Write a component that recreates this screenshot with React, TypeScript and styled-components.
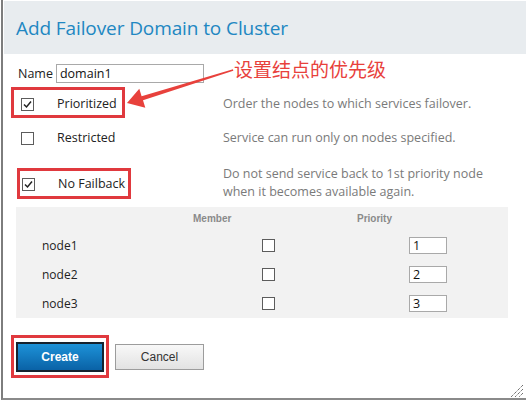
import styled, { createGlobalStyle } from "styled-components";

const GlobalStyle = createGlobalStyle`
  html, body {
    margin: 0;
    padding: 0;
    background: #fff;
  }
  body {
    font-family: "Open Sans", "Liberation Sans", sans-serif;
  }
`;

const Page = styled.div`
  position: relative;
  width: 526px;
  height: 400px;
  overflow: hidden;
`;

const Dialog = styled.div`
  box-sizing: border-box;
  width: 525px;
  height: 400px;
  margin-left: 1px;
  padding-left: 1px;
  border-left: 2px solid #7d7d7d;
  border-bottom: 2px solid #8a8a8a;
  display: flex;
  flex-direction: column;
`;

const Header = styled.div`
  height: 53px;
  margin-top: 1px;
  padding: 1px 0 0 12px;
  box-sizing: border-box;
  display: flex;
  align-items: center;
  background: #e8ecef;
  color: #2187c2;
  font-size: 19px;
  letter-spacing: -0.1px;
`;

const NameRow = styled.div`
  margin-top: 10px;
  padding-left: 14px;
  display: flex;
  align-items: center;
  gap: 3px;
  font-size: 12.5px;
  color: #222;
`;

const TextInput = styled.input<{ $w: number; $h: number }>`
  box-sizing: border-box;
  width: ${(p) => p.$w}px;
  height: ${(p) => p.$h}px;
  margin: 0;
  padding: 0 3px;
  border: 1px solid #a9a9a9;
  font-family: "Open Sans", "Liberation Sans", sans-serif;
  font-size: 12.5px;
  color: #111;
  background: #fff;
`;

const Options = styled.div`
  margin-top: 4px;
  padding-left: 17px;
  display: flex;
  flex-direction: column;
`;

const OptionRow = styled.div`
  display: grid;
  grid-template-columns: 202px 1fr;
  align-items: center;
  padding: 8px 0;
  line-height: 18px;

  &:last-child {
    padding: 10px 0 6px;
  }
`;

const OptionLabel = styled.div<{ $shift?: number }>`
  display: flex;
  align-items: center;
  gap: 23px;
  margin-left: ${(p) => p.$shift || 0}px;
  margin-top: ${(p) => (p.$shift ? 2 : 0)}px;
  font-size: 12.5px;
  color: #222;
`;

const Description = styled.div`
  font-size: 12.5px;
  color: #7a7a7a;
`;

const Box = styled.span`
  box-sizing: border-box;
  width: 13px;
  height: 13px;
  flex: none;
  display: inline-flex;
  align-items: center;
  justify-content: center;
  border: 1px solid #5c5c5c;
  background: #fff;
`;

const NodeTable = styled.div`
  width: 492px;
  margin: 0 0 0 12px;
  background: #f2f2f2;
  display: flex;
  flex-direction: column;
`;

const NodeRow = styled.div<{ $head?: boolean }>`
  display: grid;
  grid-template-columns: 177px 164px 1fr;
  align-items: ${(p) => (p.$head ? "start" : "center")};
  height: ${(p) => (p.$head ? 24 : 29)}px;
  box-sizing: border-box;
  padding-top: ${(p) => (p.$head ? 6 : 0)}px;
`;

const HeadCell = styled.div`
  font-family: "Liberation Sans", Arial, sans-serif;
  font-weight: bold;
  font-size: 10px;
  line-height: 12px;
  color: #8a8a8a;
`;

const Cell = styled.div<{ $indent: number }>`
  display: flex;
  align-items: center;
  padding-left: ${(p) => p.$indent}px;
  font-size: 12px;
  color: #222;
`;

const ButtonRow = styled.div`
  margin-top: 24px;
  padding-left: 12px;
  display: flex;
  align-items: center;
  gap: 11px;
`;

const Button = styled.button<{ $primary?: boolean }>`
  box-sizing: border-box;
  width: ${(p) => (p.$primary ? 88 : 89)}px;
  height: ${(p) => (p.$primary ? 30 : 26)}px;
  margin: 0;
  padding: 0;
  font-family: "Liberation Sans", Arial, sans-serif;
  font-size: 12px;
  font-weight: ${(p) => (p.$primary ? "bold" : "normal")};
  color: ${(p) => (p.$primary ? "#fff" : "#333")};
  border: ${(p) => (p.$primary ? "2px solid #16222e" : "1px solid #9c9c9c")};
  background: ${(p) =>
    p.$primary
      ? "linear-gradient(#1d92d8, #0a62a6)"
      : "linear-gradient(#f8f8f8, #e2e2e2)"};
`;

const Overlay = styled.svg`
  position: absolute;
  left: 0;
  top: 0;
  pointer-events: none;
`;

const Note = styled.div`
  position: absolute;
  left: 234px;
  top: 57px;
  font-family: "Noto Sans CJK SC", sans-serif;
  font-size: 19px;
  line-height: 24px;
  color: #e8413c;
`;

const Grip = styled.svg`
  position: absolute;
  right: 2px;
  bottom: 2px;
`;

function Check({ on }: { on?: boolean }) {
  return (
    <Box>
      {on && (
        <svg width="9" height="9" viewBox="0 0 9 9">
          <path d="M1 4.5 L3.5 7 L8 1.5" fill="none" stroke="#222" strokeWidth="1.5" />
        </svg>
      )}
    </Box>
  );
}

const options = [
  { label: "Prioritized", on: true, desc: ["Order the nodes to which services failover."] },
  { label: "Restricted", on: false, desc: ["Service can run only on nodes specified."] },
  {
    label: "No Failback",
    on: true,
    shift: 1,
    desc: ["Do not send service back to 1st priority node", "when it becomes available again."],
  },
];

const nodes = ["node1", "node2", "node3"];

export default function App() {
  return (
    <Page>
      <GlobalStyle />
      <Dialog>
        <Header>Add Failover Domain to Cluster</Header>
        <NameRow>
          Name
          <TextInput $w={148} $h={19} defaultValue="domain1" />
        </NameRow>
        <Options>
          {options.map((o) => (
            <OptionRow key={o.label}>
              <OptionLabel $shift={o.shift}>
                <Check on={o.on} />
                {o.label}
              </OptionLabel>
              <Description>
                {o.desc.map((d) => (
                  <div key={d}>{d}</div>
                ))}
              </Description>
            </OptionRow>
          ))}
        </Options>
        <NodeTable>
          <NodeRow $head>
            <span />
            <HeadCell>Member</HeadCell>
            <HeadCell>Priority</HeadCell>
          </NodeRow>
          {nodes.map((n, i) => (
            <NodeRow key={n}>
              <Cell $indent={26}>{n}</Cell>
              <Cell $indent={69}>
                <Check />
              </Cell>
              <Cell $indent={52}>
                <TextInput $w={38} $h={17} defaultValue={String(i + 1)} />
              </Cell>
            </NodeRow>
          ))}
        </NodeTable>
        <ButtonRow>
          <Button $primary>Create</Button>
          <Button>Cancel</Button>
        </ButtonRow>
      </Dialog>

      <Overlay width="526" height="400">
        <g fill="none" stroke="#e0393e" strokeWidth="3">
          <rect x="12.5" y="88.5" width="111" height="28" />
          <rect x="18.5" y="169.5" width="111" height="28" />
          <rect x="12.5" y="336.5" width="95" height="40" />
        </g>
        <polygon
          points="127,103 139.3,88.7 141.6,96.2 233,69.3 233.3,70.7 143,100.2 145.3,107.7"
          fill="#e8413c"
        />
      </Overlay>
      <Note>设置结点的优先级</Note>
      <Grip width="14" height="14" viewBox="0 0 14 14">
        <g stroke="#333" strokeWidth="1" strokeDasharray="1 1">
          <line x1="13" y1="1" x2="1" y2="13" />
          <line x1="13" y1="5" x2="5" y2="13" />
          <line x1="13" y1="9" x2="9" y2="13" />
        </g>
      </Grip>
    </Page>
  );
}
